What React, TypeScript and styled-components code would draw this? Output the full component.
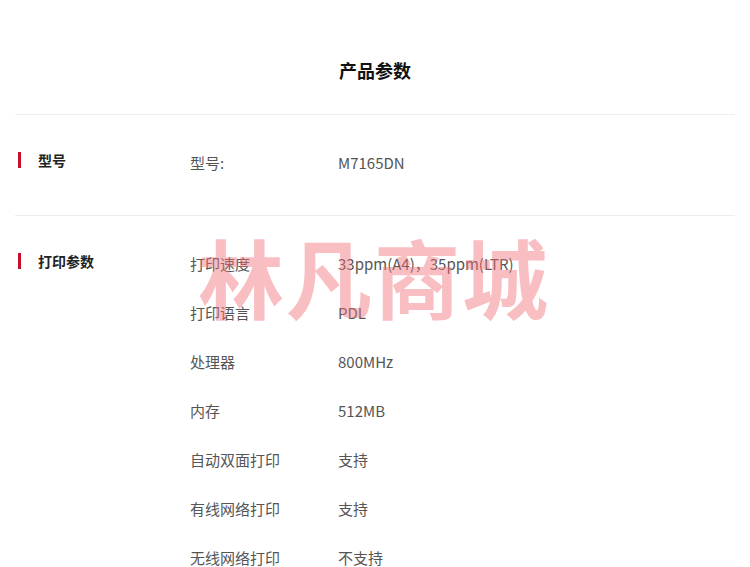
import React from 'react';
import styled, { createGlobalStyle } from 'styled-components';

const GlobalStyle = createGlobalStyle`
  html, body {
    margin: 0;
    padding: 0;
    background: #fff;
  }
  body {
    font-family: "Noto Sans CJK SC", "Noto Sans", sans-serif;
  }
`;

type Param = { name: string; value: string };

const sections: { title: string; rows: Param[] }[] = [
  { title: '型号', rows: [{ name: '型号:', value: 'M7165DN' }] },
  {
    title: '打印参数',
    rows: [
      { name: '打印速度', value: '33ppm(A4)，35ppm(LTR)' },
      { name: '打印语言', value: 'PDL' },
      { name: '处理器', value: '800MHz' },
      { name: '内存', value: '512MB' },
      { name: '自动双面打印', value: '支持' },
      { name: '有线网络打印', value: '支持' },
      { name: '无线网络打印', value: '不支持' },
    ],
  },
];

export default function App() {
  return (
    <>
      <GlobalStyle />
      <Page>
        <Heading>
          <h2>产品参数</h2>
        </Heading>
        {sections.map((s) => (
          <Section key={s.title}>
            <Aside>
              <Bar />
              <span>{s.title}</span>
            </Aside>
            <Rows>
              {s.rows.map((r) => (
                <Row key={r.name}>
                  <Name>{r.name}</Name>
                  <Value>{r.value}</Value>
                </Row>
              ))}
            </Rows>
          </Section>
        ))}
        <Watermark>林凡商城</Watermark>
      </Page>
    </>
  );
}

const Page = styled.div`
  position: relative;
  width: 750px;
  height: 567px;
  overflow: hidden;
  padding: 0 15px;
  box-sizing: border-box;
`;

const Heading = styled.div`
  padding: 57px 0 31px;
  border-bottom: 1px solid #ededed;
  text-align: center;
  h2 {
    margin: 0;
    font-size: 18px;
    line-height: 26px;
    font-weight: 700;
    color: #111;
  }
`;

const Section = styled.div`
  display: flex;
  padding: 23px 0 28px;
  border-bottom: 1px solid #ededed;
`;

const Aside = styled.div`
  display: flex;
  align-items: center;
  gap: 17px;
  width: 175px;
  height: 44px;
  padding-left: 3px;
  box-sizing: border-box;
  font-size: 14px;
  font-weight: 700;
  color: #222;
`;

const Bar = styled.i`
  display: block;
  width: 3px;
  height: 16px;
  background: #c8102e;
`;

const Rows = styled.div`
  flex: 1;
`;

const Row = styled.div`
  display: flex;
  align-items: center;
  height: 49px;
  font-size: 15px;
  color: #555;
`;

const Name = styled.span`
  width: 148px;
`;

const Value = styled.span``;

const Watermark = styled.div`
  position: absolute;
  left: 198px;
  top: 226px;
  font-size: 86px;
  font-weight: 700;
  line-height: 100px;
  letter-spacing: 2px;
  color: rgba(240, 110, 120, 0.45);
  pointer-events: none;
  white-space: nowrap;
`;
